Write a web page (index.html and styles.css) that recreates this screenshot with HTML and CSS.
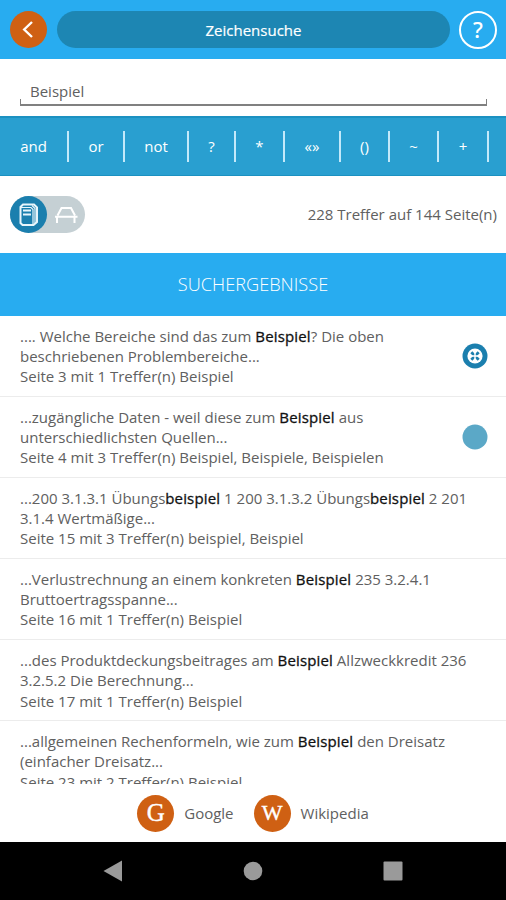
FILE: index.html
```html
<!DOCTYPE html>
<html lang="de">
<head>
  <meta charset="UTF-8" />
  <meta name="viewport" content="width=device-width, initial-scale=1.0" />
  <title>Zeichensuche</title>
  <link rel="stylesheet" href="styles.css">
</head>
<body>
  <header class="topbar">
    <button class="round-btn back-btn" aria-label="Zurück">
      <svg width="37" height="37" viewBox="0 0 37 37"><path d="M22 11 L14.2 18.5 L22 26" /></svg>
    </button>
    <h1 class="title">Zeichensuche</h1>
    <button class="round-btn help-btn" aria-label="Hilfe">?</button>
  </header>

  <div class="search">
    <div class="search-field">Beispiel</div>
  </div>

  <nav class="operators">
    <span class="op op-and">and</span>
    <span class="op op-or">or</span>
    <span class="op op-not">not</span>
    <span class="op op-any">?</span>
    <span class="op op-star">*</span>
    <span class="op op-quote">«»</span>
    <span class="op op-paren">()</span>
    <span class="op op-tilde">~</span>
    <span class="op op-plus">+</span>
  </nav>

  <div class="status">
    <div class="switch">
      <div class="switch-knob">
        <svg width="37" height="37" viewBox="0 0 37 37">
          <path class="line" d="M13 8.5 H24 L27 11.5 V26 L23.5 29 H12.5 L10.5 27 V11 Z" />
          <path class="thin" d="M11 11.5 H21 L23 13.5 V28.5 M22 9.5 L25 12.5 V27" />
          <path class="line" d="M13 14.5 H21 M13 18.5 H21" />
        </svg>
      </div>
      <svg class="switch-car" width="24" height="18" viewBox="0 0 24 18">
        <path d="M3.5 9.5 L7.5 2 H17 L21 9.5 M1 10.8 H23.5 M3 10.5 V17 M20.5 10.5 V17" />
      </svg>
    </div>
    <span class="hits">228 Treffer auf 144 Seite(n)</span>
  </div>

  <h2 class="section-title">SUCHERGEBNISSE</h2>

  <ul class="results">
    <li class="result">
      <p>.... Welche Bereiche sind das zum <b>Beispiel</b>? Die oben<br>beschriebenen Problembereiche...<br>Seite 3 mit 1 Treffer(n) Beispiel</p>
      <svg class="marker" width="26" height="26" viewBox="0 0 26 26">
        <circle cx="13" cy="13" r="12.5" fill="#1b7fae" />
        <circle cx="13" cy="13" r="7.6" fill="#fff" />
        <path d="M9.3 9.3 L16.7 16.7 M16.7 9.3 L9.3 16.7" stroke="#1b7fae" stroke-width="2.8" />
        <path d="M13 8 V18 M8 13 H18" stroke="#fff" stroke-width="1.4" />
      </svg>
    </li>
    <li class="result">
      <p>...zugängliche Daten - weil diese zum <b>Beispiel</b> aus<br>unterschiedlichsten Quellen...<br>Seite 4 mit 3 Treffer(n) Beispiel, Beispiele, Beispielen</p>
      <svg class="marker" width="26" height="26" viewBox="0 0 26 26"><circle cx="13" cy="13" r="12.5" fill="#5ba8c7" /></svg>
    </li>
    <li class="result">
      <p>...200 3.1.3.1 Übungs<b>beispiel</b> 1 200 3.1.3.2 Übungs<b>beispiel</b> 2 201<br>3.1.4 Wertmäßige...<br>Seite 15 mit 3 Treffer(n) beispiel, Beispiel</p>
    </li>
    <li class="result">
      <p>...Verlustrechnung an einem konkreten <b>Beispiel</b> 235 3.2.4.1<br>Bruttoertragsspanne...<br>Seite 16 mit 1 Treffer(n) Beispiel</p>
    </li>
    <li class="result">
      <p>...des Produktdeckungsbeitrages am <b>Beispiel</b> Allzweckkredit 236<br>3.2.5.2 Die Berechnung...<br>Seite 17 mit 1 Treffer(n) Beispiel</p>
    </li>
    <li class="result">
      <p>...allgemeinen Rechenformeln, wie zum <b>Beispiel</b> den Dreisatz<br>(einfacher Dreisatz...<br>Seite 23 mit 2 Treffer(n) Beispiel</p>
    </li>
  </ul>

  <footer class="links">
    <a class="link"><span class="round-btn letter letter-g">G</span>Google</a>
    <a class="link"><span class="round-btn letter letter-w">W</span>Wikipedia</a>
  </footer>

  <div class="navbar">
    <svg width="20" height="22" viewBox="0 0 20 22"><path d="M0.5 11 L19 0.5 V21.5 Z" /></svg>
    <svg width="20" height="20" viewBox="0 0 20 20"><circle cx="10" cy="10" r="9.3" /></svg>
    <svg width="20" height="20" viewBox="0 0 20 20"><rect x="0.5" y="0.5" width="19" height="19" rx="1" /></svg>
  </div>
</body>
</html>
```

FILE: styles.css
```css
* {
  box-sizing: border-box;
}
body {
  margin: 0;
  height: 900px;
  overflow: hidden;
  display: flex;
  flex-direction: column;
  background: #fff;
  color: #606060;
  font-family: "Open Sans", "Noto Sans", sans-serif;
  font-size: 15px;
}
.topbar {
  height: 59px;
  flex: none;
  display: flex;
  align-items: center;
  padding: 0 9px 0 10px;
  background: #28acf0;
}
.round-btn {
  width: 37px;
  height: 37px;
  flex: none;
  padding: 0;
  border: none;
  border-radius: 50%;
  display: flex;
  align-items: center;
  justify-content: center;
  background: #cf6013;
  color: #fff;
}
.back-btn path {
  fill: none;
  stroke: #fff;
  stroke-width: 2.4;
}
.help-btn {
  width: 38px;
  height: 38px;
  background: none;
  border: 2px solid #fff;
  font-family: "Noto Sans", sans-serif;
  font-size: 22px;
  font-weight: 500;
  line-height: 32px;
  padding-bottom: 2px;
}
.title {
  flex: 1;
  height: 37px;
  margin: 0 9px 0 10px;
  border-radius: 19px;
  background: #1d86b3;
  color: #fff;
  font-size: 15px;
  font-weight: 500;
  line-height: 38px;
  text-align: center;
  -webkit-text-stroke: 0.2px #fff;
}
.search {
  height: 57px;
  flex: none;
  padding: 22px 19px 0 20px;
}
.search-field {
  position: relative;
  height: 25px;
  padding-left: 10px;
  border-bottom: 2px solid #808080;
  line-height: 21px;
}
/* short upturned ends of the input line */
.search-field::before,
.search-field::after {
  content: "";
  position: absolute;
  bottom: 0;
  left: 0;
  width: 1px;
  height: 5px;
  background: #808080;
}
.search-field::after {
  left: auto;
  right: 0;
}
.operators {
  height: 60px;
  flex: none;
  display: flex;
  align-items: center;
  background: #299fd0;
  border-top: 2px solid #1b91c1;
  border-bottom: 1px solid #1b91c1;
  color: #fff;
  font-weight: 500;
}
.op {
  height: 31px;
  border-right: 2px solid #c3e9fa;
  line-height: 31px;
  text-align: center;
}
.op-and { width: 69px; }
.op-or { width: 56px; }
.op-not { width: 64px; }
.op-any { width: 47px; }
.op-star { width: 49px; }
.op-quote { width: 56px; }
.op-paren { width: 49px; }
.op-tilde { width: 49px; }
.op-plus { width: 50px; }
.status {
  height: 77px;
  flex: none;
  display: flex;
  align-items: center;
  justify-content: space-between;
  padding: 0 9px 0 10px;
}
.hits {
  padding-bottom: 2px;
}
.switch {
  width: 75px;
  height: 37px;
  display: flex;
  align-items: center;
  border-radius: 19px;
  background: #c5d0d4;
}
.switch-knob {
  width: 37px;
  height: 37px;
  border-radius: 50%;
  background: #1b7fae;
}
.switch-knob .line,
.switch-knob .thin {
  fill: none;
  stroke: #e8f5fb;
  stroke-width: 2;
}
.switch-knob .thin {
  stroke-width: 1.2;
}
.switch-car {
  margin-left: 7px;
  fill: none;
  stroke: #fff;
  stroke-width: 2;
}
.section-title {
  height: 63px;
  flex: none;
  margin: 0;
  background: #28acf0;
  color: #fff;
  font-size: 18.2px;
  font-weight: 300;
  line-height: 63px;
  text-align: center;
}
.results {
  height: 468px;
  flex: none;
  margin: 0;
  padding: 0;
  overflow: hidden;
  list-style: none;
}
.result {
  height: 81.1px;
  display: flex;
  align-items: center;
  justify-content: space-between;
  padding: 0 18px 0 20px;
  border-bottom: 1px solid #ececec;
  line-height: 20.2px;
  white-space: nowrap;
}
.result p {
  margin: 0;
}
.result b {
  color: #111;
  font-weight: 500;
  letter-spacing: 0.15px;
  -webkit-text-stroke: 0.3px #111;
}
.links {
  height: 58px;
  flex: none;
  display: flex;
  align-items: center;
  justify-content: center;
  gap: 20px;
}
.link {
  display: flex;
  align-items: center;
  gap: 10px;
}
.letter {
  font-family: "Liberation Serif", serif;
  font-size: 25px;
  -webkit-text-stroke: 0.4px #fff;
}
.letter-w {
  font-size: 22px;
}
.navbar {
  flex: 1;
  display: flex;
  align-items: center;
  justify-content: center;
  gap: 120px;
  background: #000;
}
.navbar svg {
  fill: #9a9a9a;
}
```
